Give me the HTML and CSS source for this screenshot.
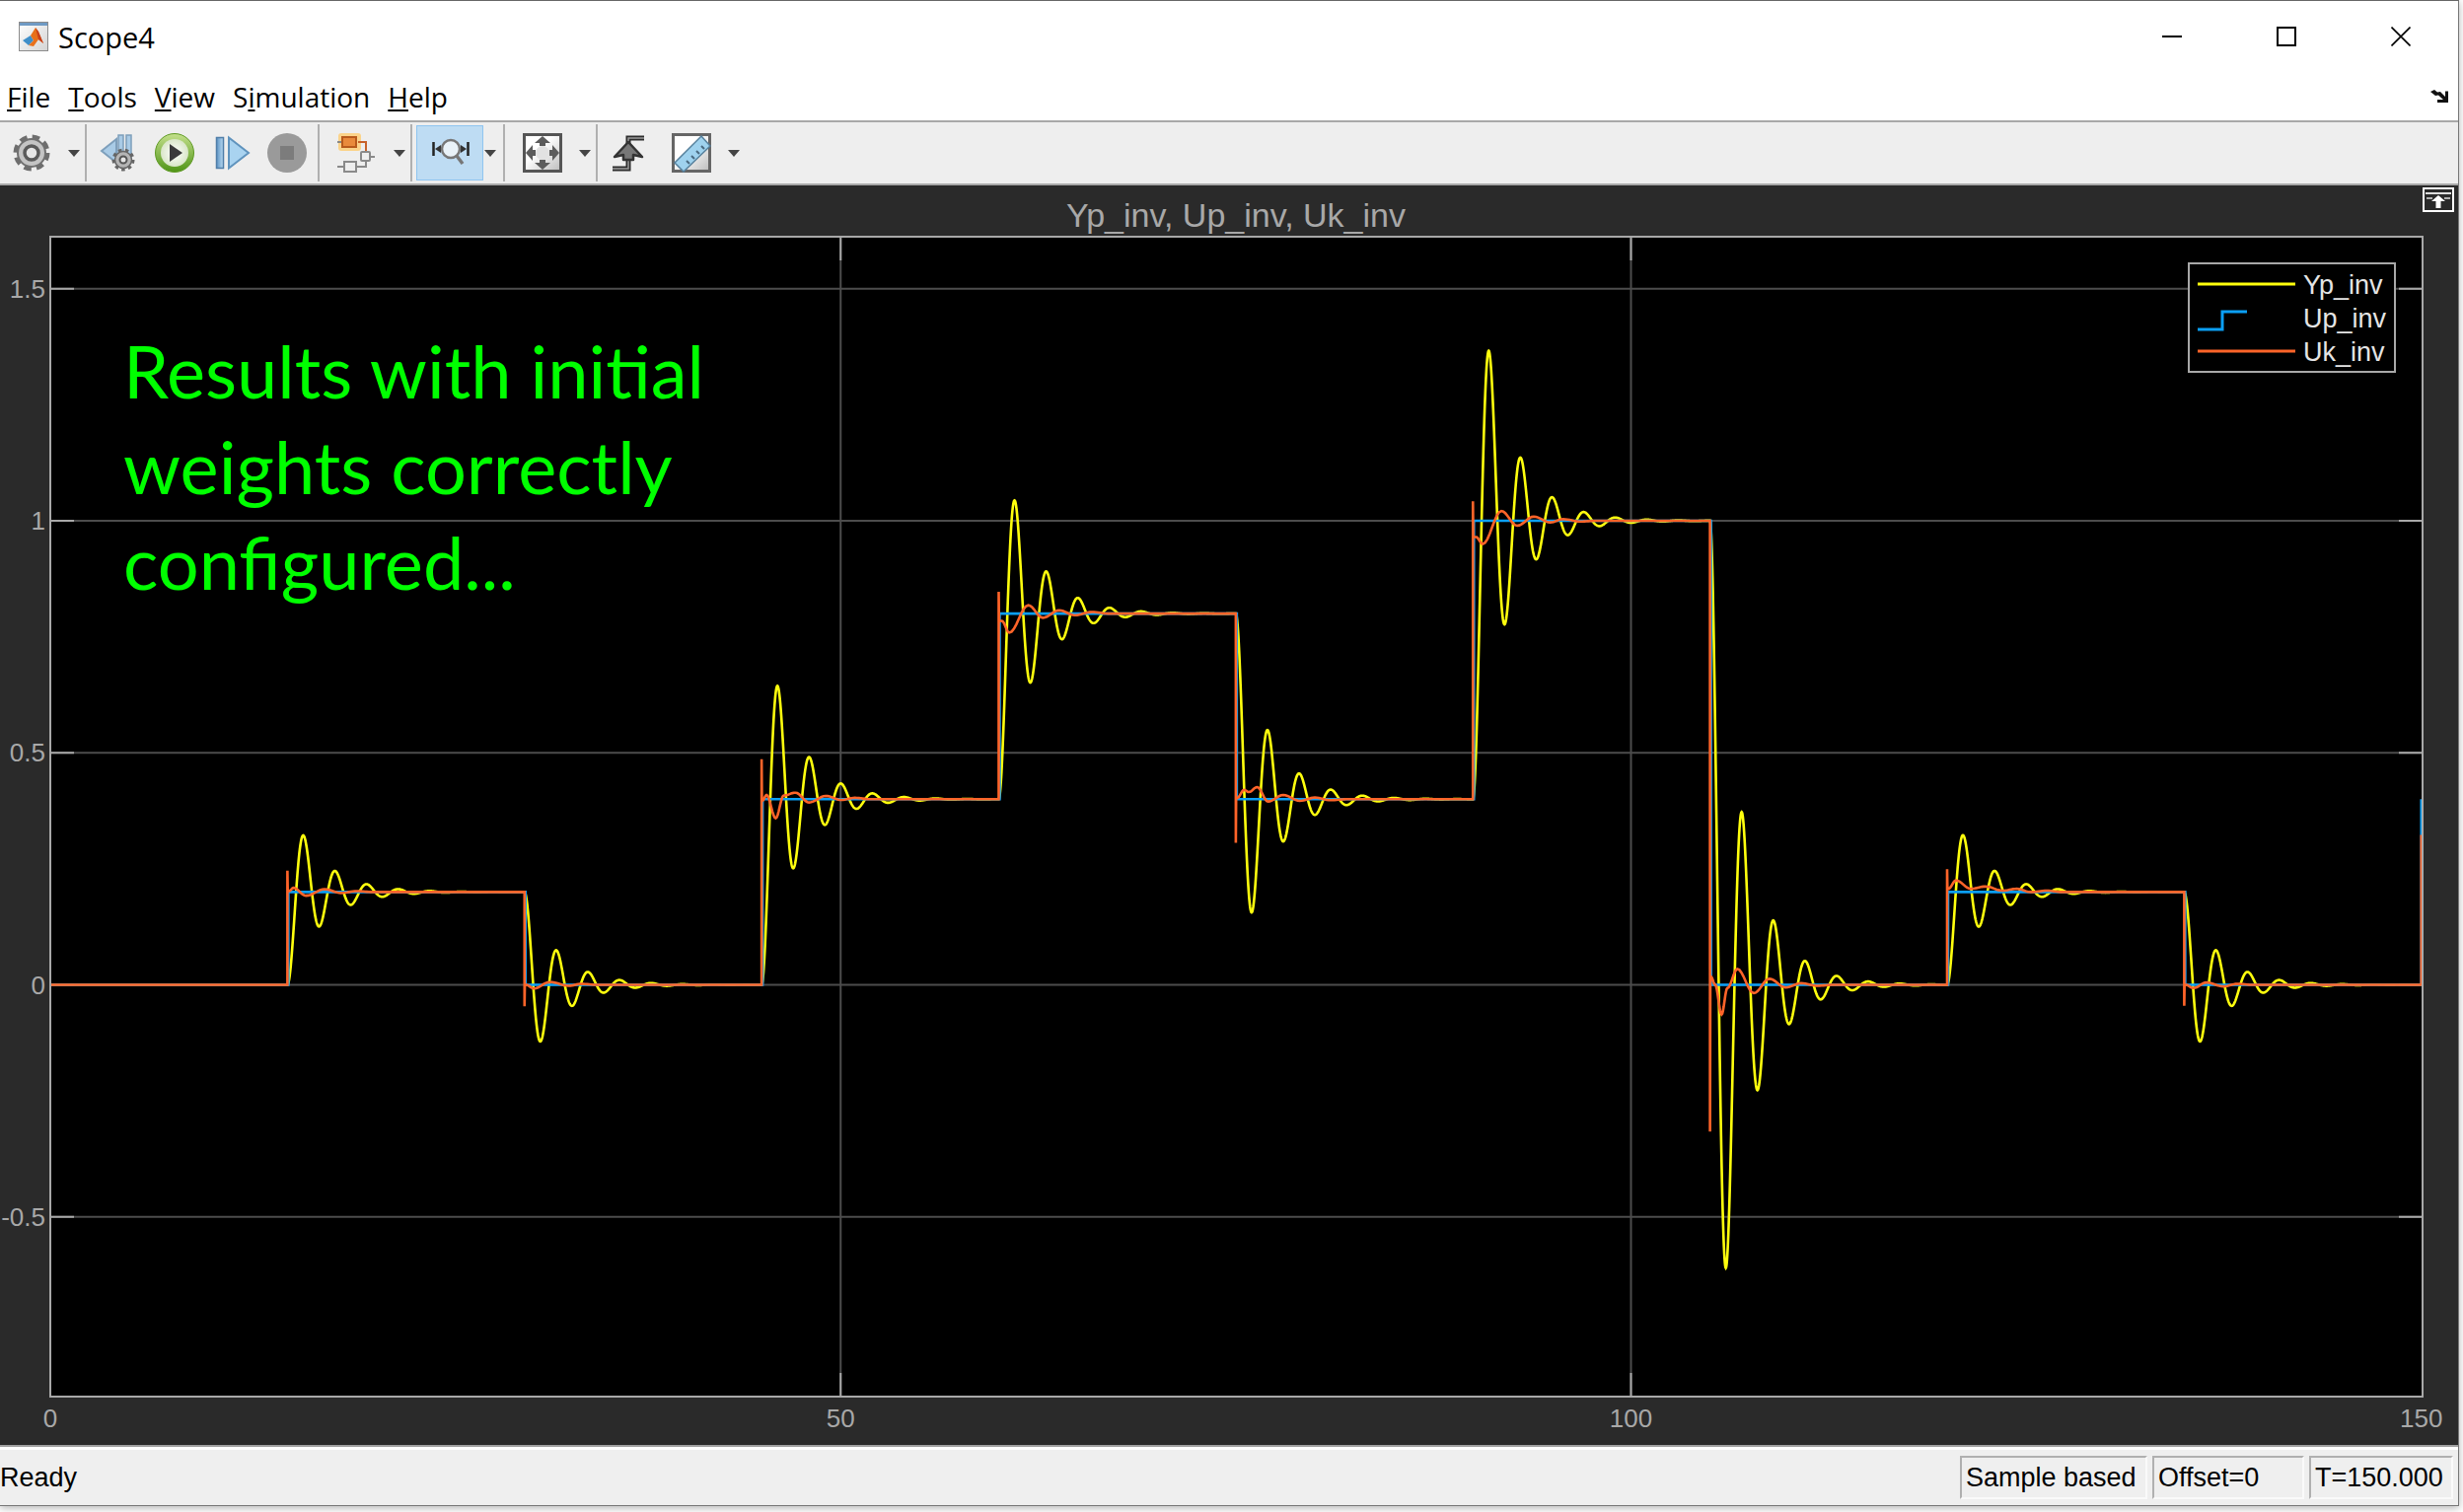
FILE: index.html
```html
<!DOCTYPE html>
<html>
<head>
  <meta charset="UTF-8">
  <title>Scope4</title>
  <link rel="stylesheet" href="styles.css">
</head>
<body>

  <div class="window">

    <div class="titlebar">
      <svg class="applogo" viewBox="0 0 30 30">
        <defs>
          <linearGradient id="winbg" x1="0" y1="0" x2="1" y2="1"><stop offset="0" stop-color="#ffffff"/><stop offset="1" stop-color="#d4d4d4"/></linearGradient>
        </defs>
        <rect x="0.5" y="0.5" width="29" height="29" fill="url(#winbg)" stroke="#8c8c8c"/>
        <rect x="1" y="1" width="28" height="3" fill="#6f9ac4"/>
        <path d="M4 19 L12 14 L15 19 L10 24 Z" fill="#3f8fc9"/>
        <path d="M12 14 L17 6 L20 10 L25 22 L20 18 L15 25 L10 24 L15 19 Z" fill="#e8701a"/>
        <path d="M17 6 L20 10 L25 22 L20 18 Z" fill="#c8401a"/>
      </svg>
      <span class="wintitle">Scope4</span>
      <div class="winbtns">
        <svg class="winbtn" viewBox="0 0 20 20"><path d="M0 10H20" stroke="#000" stroke-width="2"/></svg>
        <svg class="winbtn" viewBox="0 0 20 20"><rect x="1" y="1" width="18" height="18" fill="none" stroke="#000" stroke-width="2"/></svg>
        <svg class="winbtn" viewBox="0 0 20 20"><path d="M0.5 0.5L19.5 19.5M19.5 0.5L0.5 19.5" stroke="#000" stroke-width="1.6"/></svg>
      </div>
    </div>

    <div class="menubar">
      <span><u>F</u>ile</span>
      <span><u>T</u>ools</span>
      <span><u>V</u>iew</span>
      <span>S<u>i</u>mulation</span>
      <span><u>H</u>elp</span>
      <svg class="dock" viewBox="0 0 20 16"><path d="M1 3L5 1L8 3.5L11 3L16 8V2.5H19V14H8V11H14L9 6.5L6 7Z" fill="#111"/></svg>
    </div>

    <div class="toolbar">
      <div class="group g1">
        <svg class="ico" viewBox="0 0 40 40">
          <circle cx="20" cy="20" r="16" fill="none" stroke="#6e6e6e" stroke-width="5" stroke-dasharray="7.4 5.2"/>
          <circle cx="20" cy="20" r="14" fill="#c4c4c4" stroke="#707070" stroke-width="2"/>
          <circle cx="20" cy="20" r="7" fill="#e6e6e6" stroke="#5a5a5a" stroke-width="3.5"/>
        </svg>
        <i class="caret"></i>
      </div>
      <div class="group g2">
        <svg class="ico" viewBox="0 0 40 40">
          <path d="M3 18L18 6V30Z" fill="#a9cbe6" stroke="#7e9fbb" stroke-width="2"/>
          <rect x="20" y="2" width="5" height="24" fill="#a9cbe6" stroke="#7e9fbb" stroke-width="1.5"/>
          <rect x="28" y="2" width="5" height="24" fill="#a9cbe6" stroke="#7e9fbb" stroke-width="1.5"/>
          <circle cx="25" cy="27" r="9.5" fill="none" stroke="#666" stroke-width="4" stroke-dasharray="3.4 3.2"/>
          <circle cx="25" cy="27" r="8.5" fill="#b5b5b5" stroke="#666" stroke-width="1.5"/>
          <circle cx="25" cy="27" r="3.5" fill="#e6e6e6" stroke="#555" stroke-width="2"/>
        </svg>
        <svg class="ico" viewBox="0 0 40 40">
          <defs>
            <linearGradient id="greenrim" x1="0" y1="0" x2="0" y2="1"><stop offset="0" stop-color="#c4e08c"/><stop offset="1" stop-color="#4f9416"/></linearGradient>
            <radialGradient id="whitedisk"><stop offset="0" stop-color="#ffffff"/><stop offset="1" stop-color="#d9e6c8"/></radialGradient>
          </defs>
          <circle cx="20" cy="20" r="19.5" fill="url(#greenrim)" stroke="#5f9a24" stroke-width="1"/>
          <circle cx="20" cy="20" r="14" fill="url(#whitedisk)"/>
          <path d="M15 11L28 20L15 29Z" fill="#3a3a3a"/>
        </svg>
        <svg class="ico" viewBox="0 0 40 40">
          <defs>
            <linearGradient id="bluebar" x1="0" y1="0" x2="1" y2="0"><stop offset="0" stop-color="#5c93c4"/><stop offset="1" stop-color="#bcdcf2"/></linearGradient>
          </defs>
          <rect x="5.5" y="4.5" width="7" height="31" fill="url(#bluebar)" stroke="#4f7ea8" stroke-width="1.5"/>
          <path d="M18 4.5L38 20L18 35.5Z" fill="#a9d3f0" stroke="#5f93bd" stroke-width="2"/>
        </svg>
        <svg class="ico" viewBox="0 0 40 40">
          <circle cx="20" cy="20" r="20" fill="#9a9a9a"/>
          <rect x="13" y="13" width="14" height="14" fill="#7c7c7c"/>
        </svg>
      </div>
      <div class="group g3">
        <svg class="ico" viewBox="0 0 40 40">
          <rect x="1" y="0" width="23" height="18" rx="3" fill="#fbd38a"/>
          <path d="M21 9H29V19" fill="none" stroke="#c8622a" stroke-width="2"/>
          <path d="M0 9H5" stroke="#888" stroke-width="2"/>
          <rect x="5" y="4" width="14" height="10" fill="#e98a3c" stroke="#b85a1c" stroke-width="2"/>
          <path d="M32 24H38M6 34H0M19 34H29V27" fill="none" stroke="#8a8a8a" stroke-width="2"/>
          <rect x="24" y="19" width="9" height="9" rx="1" fill="#eee" stroke="#8a8a8a" stroke-width="2"/>
          <rect x="7" y="29" width="12" height="10" fill="#eee" stroke="#8a8a8a" stroke-width="2"/>
        </svg>
        <i class="caret"></i>
      </div>
      <div class="group g4">
        <div class="active">
          <svg class="ico" viewBox="0 0 40 40">
            <path d="M3.5 9V23M38.5 9V23" stroke="#222" stroke-width="2.5"/>
            <path d="M5 16L11 12V20Z M37 16L31 12V20Z" fill="#333"/>
            <circle cx="21" cy="16" r="9" fill="#e9f2f8" stroke="#777" stroke-width="2.5"/>
            <path d="M27 23L33 31" stroke="#777" stroke-width="3.5"/>
          </svg>
        </div>
        <i class="caret"></i>
      </div>
      <div class="group g5">
        <svg class="ico" viewBox="0 0 40 40">
          <defs>
            <linearGradient id="sheet" x1="0" y1="0" x2="1" y2="1"><stop offset="0.4" stop-color="#ffffff"/><stop offset="1" stop-color="#bcbcbc"/></linearGradient>
          </defs>
          <rect x="1.5" y="1.5" width="37" height="37" fill="url(#sheet)" stroke="#555" stroke-width="3"/>
          <circle cx="20" cy="20" r="7" fill="#e2e2e2"/>
          <path d="M20 3L28 10H23V13H17V10H12Z M20 37L28 30H23V27H17V30H12Z M3 20L10 12V17H13V23H10V28Z M37 20L30 12V17H27V23H30V28Z" fill="#5c5c5c"/>
        </svg>
        <i class="caret"></i>
      </div>
      <div class="group g6">
        <svg class="ico" viewBox="0 0 40 40">
          <path d="M5 36H21V5H37" fill="none" stroke="#2c2c2c" stroke-width="5"/>
          <path d="M5 36H21V5H37" fill="none" stroke="#9a9a9a" stroke-width="1.5"/>
          <path d="M21 9L35 24L26 22V27H16V22L7 24Z" fill="#777" stroke="#333" stroke-width="2.5" stroke-linejoin="round"/>
        </svg>
        <svg class="ico" viewBox="0 0 40 40">
          <rect x="1.5" y="1.5" width="37" height="37" fill="url(#sheet)" stroke="#666" stroke-width="3"/>
          <path d="M30 3L39 13L12 39L3 30Z" fill="#9fd2ee" stroke="#56809c" stroke-width="1.5"/>
          <path d="M30 13L33 16M25 18L28 21M20 23L23 26M15 28L18 31" stroke="#4a6a80" stroke-width="2"/>
        </svg>
        <i class="caret"></i>
      </div>
    </div>

    <div class="panel">
      <div class="plottitle">Yp_inv, Up_inv, Uk_inv</div>
      <svg id="chart" class="chart" width="2492" height="1226"></svg>

      <svg class="expand" viewBox="0 0 32 25">
        <rect x="1" y="1" width="30" height="23" fill="#2a2a2a" stroke="#fff" stroke-width="2"/>
        <path d="M3 6H29" stroke="#ddd" stroke-width="2"/>
        <path d="M16 8L23 14H18.5V21H13.5V14H9Z" fill="#fff"/>
        <path d="M4 11H10M22 11H28" stroke="#ddd" stroke-width="1.5"/>
      </svg>

      <div class="note">
        <div>Results with initial</div>
        <div>weights correctly</div>
        <div>configured...</div>
      </div>

      <div class="legend">
        <div class="row">
          <svg class="swatch" viewBox="0 0 100 34"><path d="M0 16H99" stroke="#ffff0d" stroke-width="3"/></svg>
          <span>Yp_inv</span>
        </div>
        <div class="row">
          <svg class="swatch" viewBox="0 0 100 34"><path d="M0 28H25V10H50" fill="none" stroke="#0b9ff5" stroke-width="3"/></svg>
          <span>Up_inv</span>
        </div>
        <div class="row">
          <svg class="swatch" viewBox="0 0 100 34"><path d="M0 16H99" stroke="#ff6429" stroke-width="3"/></svg>
          <span>Uk_inv</span>
        </div>
      </div>
    </div>

    <div class="statusbar">
      <span class="ready">Ready</span>
      <span class="field f1">Sample based</span>
      <span class="field f2">Offset=0</span>
      <span class="field f3">T=150.000</span>
    </div>
  </div>

  <script src="chart.js"></script>
</body>
</html>
```

FILE: styles.css
```css
html, body { margin: 0; padding: 0; height: 100%; background: #fff; overflow: hidden; }

.window { width: 2493px; height: 1527px; box-sizing: border-box; display: flex; flex-direction: column; border-top: 1px solid #666; border-right: 1px solid #777; border-bottom: 1px solid #777; box-shadow: 0 2px 8px rgba(0,0,0,0.3); background: #fff; }

.titlebar { height: 72px; display: flex; align-items: center; padding-left: 19px; flex: none; }
.applogo { width: 30px; height: 30px; margin-right: 10px; }
.wintitle { font: 29px "Open Sans", sans-serif; color: #000; }
.winbtns { margin-left: auto; display: flex; gap: 96px; padding-right: 48px; }
.winbtn { width: 20px; height: 20px; }

.menubar { height: 49px; display: flex; align-items: center; gap: 18px; padding-left: 7px; flex: none; font: 28px "Open Sans", sans-serif; color: #000; }
.dock { width: 20px; height: 16px; margin-left: auto; margin-right: 9px; }

.toolbar { height: 66px; box-sizing: border-box; flex: none; display: flex; background: #eee; border-top: 2px solid #a8a8a8; border-bottom: 2px solid #a8a8a8; padding: 2px 0; }
.group { display: flex; align-items: center; box-sizing: border-box; border-right: 2px solid #b0b0b0; }
.ico { width: 40px; height: 40px; flex: none; }
.caret { width: 0; height: 0; flex: none; border-left: 6px solid transparent; border-right: 6px solid transparent; border-top: 7px solid #444; }
.g1 { width: 88px; padding-left: 12px; gap: 17px; }
.g2 { width: 236px; padding-left: 12px; gap: 17px; }
.g3 { width: 94px; padding-left: 18px; gap: 17px; }
.g4 { width: 94px; padding-left: 4px; gap: 1px; }
.g5 { width: 94px; padding-left: 18px; gap: 17px; }
.g6 { padding-left: 10px; gap: 25px; border-right: none; }
.g6 .caret { margin-left: -8px; }
.active { width: 68px; height: 56px; box-sizing: border-box; background: #bedcf3; border: 1px solid #8fc5f0; display: flex; align-items: center; justify-content: center; }

.panel { flex: none; height: 1277px; position: relative; background: #2a2a2a; display: flex; flex-direction: column; }
.plottitle { height: 51px; box-sizing: border-box; padding-top: 10px; display: flex; align-items: center; justify-content: center; padding-left: 14px; font: 34px "Liberation Sans", sans-serif; color: #a8a8a8; }
.chart { display: block; flex: none; }
.chart text { font: 26px "Liberation Sans", sans-serif; fill: #a8a8a8; }

.expand { position: absolute; left: 2456px; top: 2px; width: 32px; height: 25px; }

.note { position: absolute; left: 125px; top: 139px; font: 74px Lato, sans-serif; line-height: 97px; color: #00ff00; white-space: nowrap; }

.legend { position: absolute; left: 2218px; top: 78px; width: 211px; height: 112px; box-sizing: border-box; border: 2px solid #a8a8a8; background: #000; padding-top: 4px; }
.row { height: 34px; display: flex; align-items: center; padding-left: 8px; font: 27px "Liberation Sans", sans-serif; color: #e4e4e4; }
.swatch { width: 100px; height: 34px; margin-right: 7px; flex: none; }

.statusbar { flex: 1; display: flex; align-items: center; background: #efefef; border-top: 2px solid #a0a0a0; box-shadow: inset 0 3px 0 #fff; padding-top: 3px; box-sizing: border-box; font: 27px "Liberation Sans", sans-serif; color: #000; gap: 5px; padding-right: 5px; }
.ready { margin-right: auto; }
.field { height: 44px; box-sizing: border-box; display: flex; align-items: center; padding-left: 4px; border-left: 2px solid #b0b0b0; border-top: 2px solid #b0b0b0; border-right: 2px solid #fafafa; border-bottom: 2px solid #fafafa; }
.f1 { width: 190px; }
.f2 { width: 154px; }
.f3 { width: 146px; }
```

FILE: chart.js
```js
var svg = document.getElementById('chart');
var NS = 'http://www.w3.org/2000/svg';

function X(t) { return 51 + t * 16.025; }
function Y(v) { return 759.5 - v * 470.5; }

function add(tag, attrs, txt) {
  var el = document.createElementNS(NS, tag);
  for (var k in attrs) el.setAttribute(k, attrs[k]);
  if (txt !== undefined) el.textContent = txt;
  svg.appendChild(el);
  return el;
}

// set point changes; spike and pts are read off the Uk trace, relative to the new level
var steps = [
  { t: 15,  v: 0.2, spike: 0.046,  pts: [[0.1, 0.002], [0.39, 0.009], [1.17, -0.008], [2.36, 0.006], [3.4, -0.002], [4.4, 0.002]] },
  { t: 30,  v: 0,   spike: -0.046, pts: [[0.1, 0], [0.6, -0.008], [1.6, 0.006], [2.8, -0.002], [3.6, 0.002]] },
  { t: 45,  v: 0.4, spike: 0.086,  pts: [[0.06, -0.003], [0.31, 0.009], [0.89, -0.041], [1.4, 0.008], [2.14, 0.014], [3, -0.007], [4.05, 0.007], [5.05, -0.0015], [5.9, 0.003]] },
  { t: 60,  v: 0.8, spike: 0.047,  pts: [[0.08, -0.016], [0.2, -0.016], [0.67, -0.041], [1.87, 0.018], [2.79, -0.009], [3.83, 0.007], [4.82, -0.0035], [5.9, 0.0035]] },
  { t: 75,  v: 0.4, spike: -0.094, pts: [[0.1, 0.003], [0.52, 0.02], [0.83, 0.0155], [1.35, 0.026], [2.04, -0.005], [3, 0.009], [4.05, -0.0035], [5, 0.0035], [6, -0.002]] },
  { t: 90,  v: 1,   spike: 0.042,  pts: [[0.08, -0.035], [0.2, -0.035], [0.62, -0.05], [1.8, 0.021], [2.8, -0.0106], [3.85, 0.009], [4.9, -0.0035], [5.7, 0.0035], [6.8, -0.0015]] },
  { t: 105, v: 0,   spike: -0.316, pts: [[0.05, 0.018], [0.33, 0], [0.73, -0.064], [1.1, -0.007], [1.73, 0.034], [2.77, -0.018], [3.76, 0.013], [4.78, -0.0057], [5.78, 0.0035], [6.8, -0.002]] },
  { t: 120, v: 0.2, spike: 0.049,  pts: [[0.08, 0.007], [0.56, 0.025], [1.5, 0.007], [2.43, 0.012], [3.5, 0.003], [4.4, 0.007], [5.3, 0], [6.3, 0.003]] },
  { t: 135, v: 0,   spike: -0.045, pts: [[0.1, 0], [0.58, -0.007], [1.41, 0.005], [2.5, -0.0035], [3.35, 0.002]] }
];

// Yp: second order step response, period 2, each half swing about 0.6 of the last
function yp(t) {
  var y = 0, prev = 0, s = 0.494, w = Math.PI;
  steps.forEach(function (st) {
    var d = t - st.t;
    if (d > 0) y += (st.v - prev) * (1 - Math.exp(-s * d) * (Math.cos(w * d) + s / w * Math.sin(w * d)));
    prev = st.v;
  });
  return y;
}

function pt(t, v) { return X(t).toFixed(2) + ' ' + Y(v).toFixed(2); }

var yellow = 'M' + pt(0, 0);
for (var t = 0; t <= 150; t += 0.02) yellow += 'L' + pt(t, yp(t));

var blue = 'M' + pt(0, 0), prev = 0;
steps.forEach(function (st) {
  blue += 'L' + pt(st.t + 0.06, prev) + 'L' + pt(st.t + 0.06, st.v);
  prev = st.v;
});
blue += 'L' + pt(150, 0) + 'L' + pt(150, 0.4);

var orange = 'M' + pt(0, 0);
prev = 0;
steps.forEach(function (st) {
  orange += 'L' + pt(st.t, prev) + 'L' + pt(st.t, st.v + st.spike);
  var list = st.pts.concat([[st.pts[st.pts.length - 1][0] + 1, 0]]);
  var a = [0.02, list[0][1]];
  orange += 'L' + pt(st.t + a[0], st.v + a[1]);
  list.forEach(function (b) {
    for (var k = 1; k <= 8; k++) {
      var f = (1 - Math.cos(Math.PI * k / 8)) / 2;
      orange += 'L' + pt(st.t + a[0] + (b[0] - a[0]) * k / 8, st.v + a[1] + (b[1] - a[1]) * f);
    }
    a = b;
  });
  prev = st.v;
});
orange += 'L' + pt(150, 0) + 'L' + pt(150, 0.323);

add('rect', { x: 51, y: 1, width: 2405, height: 1176, fill: '#000' });

// grid and ticks
[1.5, 1, 0.5, 0, -0.5].forEach(function (v) {
  add('path', { d: 'M51 ' + Y(v) + 'H2456', stroke: '#4c4c4c', 'stroke-width': 2 });
  add('path', { d: 'M51 ' + Y(v) + 'H75M2432 ' + Y(v) + 'H2456', stroke: '#a8a8a8', 'stroke-width': 2 });
  add('text', { x: 46, y: Y(v) + 9, 'text-anchor': 'end' }, String(v));
});
[50, 100].forEach(function (t) {
  add('path', { d: 'M' + X(t) + ' 1V1177', stroke: '#4c4c4c', 'stroke-width': 2 });
  add('path', { d: 'M' + X(t) + ' 1V25M' + X(t) + ' 1153V1177', stroke: '#a8a8a8', 'stroke-width': 2 });
});
[0, 50, 100, 150].forEach(function (t) {
  add('text', { x: X(t), y: 1208, 'text-anchor': 'middle' }, String(t));
});

// traces
[[yellow, '#ffff0d'], [blue, '#0b9ff5'], [orange, '#ff6429']].forEach(function (c) {
  add('path', { d: c[0], fill: 'none', stroke: c[1], 'stroke-width': 2.6 });
});

add('rect', { x: 51, y: 1, width: 2405, height: 1176, fill: 'none', stroke: '#a8a8a8', 'stroke-width': 2 });
```
